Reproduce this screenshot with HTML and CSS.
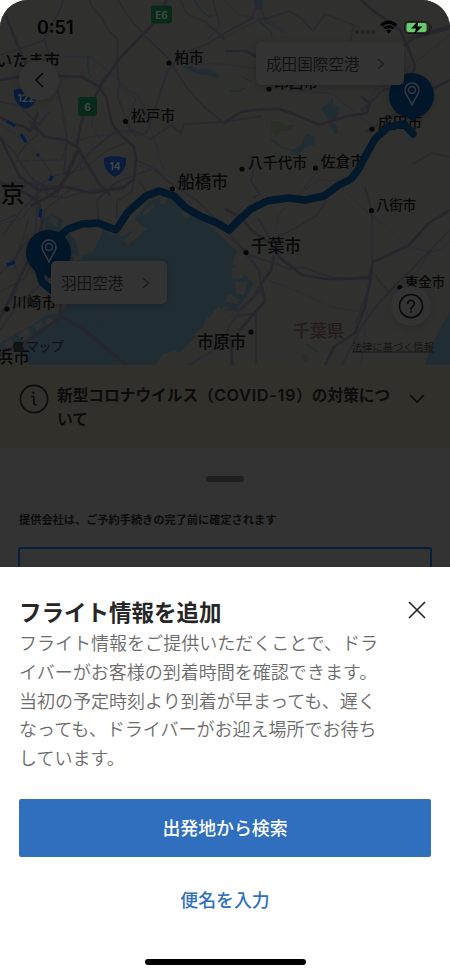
FILE: index.html
```html
<!DOCTYPE html>
<html lang="ja">
<head>
<meta charset="utf-8">
<meta name="viewport" content="width=device-width, initial-scale=1">
<title>フライト情報を追加</title>
<link rel="stylesheet" href="styles.css">
</head>
<body>
<div class="phone">
  <div class="backdrop">
    <section class="map">
      <svg class="map-art" width="450" height="365" viewBox="0 0 450 365">
        <g class="water">
          <path d="M44 220L52 213L62 220L67 231L76 242L79 258L94 251L106 224L118 235L126 231L137 216L149 202L163 196L180 204L194 216L210 226L225 240L237 251L232 264L242 271L253 284L247 296L236 310L225 306L211 315L198 334L181 352L164 353L155 365L30 365L20 352L0 348L0 343L19 332L34 324L46 315L61 313L71 295L59 277L50 250Z"/>
          <path d="M450 312L438 333L430 350L425 365L450 365Z"/>
          <path d="M183 66L190 66L197 69L209 69L220 75L218 78L206 75L197 74L190 70Z"/>
          <path d="M321 109L333 98L333 104L340 109L336 118L329 120Z"/>
          <path d="M329 122L336 125L338 133L334 134Z"/>
          <path d="M291 151L301 145L306 134L315 137L314 145L305 147L297 156Z"/>
          <path d="M253 0L263 0L262 10L256 9Z"/>
        </g>
        <g class="park"><path d="M271 121L278 121L283 125L295 125L289 131L281 131L277 137L271 131Z"/><path d="M302 354l4 0 3 5-3 3-4-3z"/></g>
        <g class="land">
          <path d="M72 253L82 259L73 262ZM80 237L89 235L87 249L82 246ZM94 231L100 230L100 240L95 237ZM107 234L119 228L131 217L138 223L147 229L128 245L123 241L135 230L122 236ZM142 214L151 204L155 206L147 214ZM160 198L169 196L166 204L160 204Z"/>
          <path d="M232 267L244 268L243 278L232 279ZM235 282L248 282L244 296L236 293ZM229 294L240 299L237 304L225 301ZM183 209l8 1-3 8-7-3z"/>
          <path d="M51 216l7 3-1 8-9-6zM63 220l8 5-2 7-8-5zM45 321l6-4 4 7-6 4zM34 325l7-4 3 5-7 5zM18 334l10-6 4 7-10 6zM4 343l8-4 3 6-8 4zM203 324l5-7 5 6-5 7zM213 312l6-6 4 5-6 7zM194 334l6-5 4 6-6 6zM164 354l12-4 7 15-20 0z"/>
        </g>
        <g class="streams">
          <path d="M88 54L88 66L90 77M194 0L202 11L209 17L213 15M258 20L271 32L272 38M230 91L239 91L245 88M242 77L252 82M271 139L281 147L295 151M306 344L318 352"/>
        </g>
        <g class="coast-lines">
          <path d="M0 312L12 301L20 279L14 263L21 244L29 218M0 193L12 181L37 186L54 176L83 169L108 150L128 142M2 236L22 210L45 187L80 187M0 222L18 214L36 195M0 292L25 278L39 249L45 210L72 188M0 356L20 344L40 335L57 319M86 268L99 295L104 318L99 334L92 342M213 0L220 26L208 39"/>
        </g>
        <g class="roads">
          <path d="M0 55L22 48L43 41L61 8L63 0M45 41L51 64L62 108L67 139L64 174M0 80L20 75L37 76M0 137L15 153L22 165L34 181L49 191M0 200L16 194L28 183L59 187L91 151L115 132L132 130L151 139L171 125L181 133L184 124L225 122L262 116M118 0L128 16L145 36L168 58L187 88L203 106L225 124M89 0L93 8L102 18L109 31L118 40L117 63L119 84L118 98L130 130L136 136L147 132L168 70L181 55L209 43L225 33L252 18L258 0L265 19L289 11L302 19L313 31L325 14L346 22L354 25L350 41M180 0L187 14L205 22L216 31L225 40M136 160L155 169L164 178L179 189L196 200L218 221L239 245L259 271L261 289L245 307L239 311M225 309L240 311L253 297L261 284M253 198L260 194L251 181L254 168L250 155M258 218L271 240L294 229L316 216L326 201M247 254L273 263L290 269L305 267L318 273L336 278L369 279M365 187L372 212L372 270L369 289L355 324M342 365L361 327L384 297L405 276L450 230M376 276L389 293M361 111L369 104L381 92L398 84M365 132L383 122L398 112L412 104L433 93M413 164L432 153L450 157M238 316L256 313L256 365M238 314L230 325L225 336L211 352L189 365M0 330L19 303L38 287L53 274M0 273L15 258L23 245L35 237L37 205L38 180M38 181L49 196L63 198L91 190L124 189M98 220L97 200L117 182L152 169M117 218L117 201L132 192L134 178M139 180L145 190L158 202M0 102L20 106L39 125L49 112M18 155L28 143L38 134L29 121"/>
        </g>
        <g class="roads major">
          <path d="M6 16L14 36L26 65M0 80L33 75L60 76L82 77L98 86L106 97L112 124L121 135L134 147L136 159L134 179L124 187L91 193L66 187L38 190L20 177L0 137M0 182L27 194L39 202L42 223L35 246L22 273L0 319M167 0L151 26L121 57L102 83L93 101L84 112L79 132L77 147L88 165L99 184L110 195M77 151L64 180L54 193L31 206M32 123L45 137L66 140L79 149L68 173L57 193M0 117L12 124L23 126L30 131L33 125L38 112M225 51L246 51L257 57L279 67L308 73M225 122L241 112L254 110L279 109L299 116L319 125L347 116L367 113L370 104L361 96M361 0L375 12L400 30L408 47L415 66L411 80M450 80L432 89L418 99M400 48L414 38L429 34L450 28M410 38L433 31L450 26M225 209L241 217L251 230L272 245L280 258L302 275L326 279L347 279L369 277L373 262L408 246L429 223L450 210M372 270L365 307L355 333L334 347L325 365M274 255L271 270L261 284L265 301L239 331M232 365L231 341L225 337M61 302L60 316L86 331L119 359L128 365M0 354L24 344L61 317"/>
        </g>
        <g class="rails">
          <path d="M54 57L91 57L115 77L129 91L138 95L145 110L160 159L164 171M136 98L127 124L132 132L90 137L66 144L62 160L15 161M93 115L92 126L101 142M168 61L199 64L225 64M0 124L30 145L52 173L39 190M225 37L265 17L289 34M225 64L260 69L274 78L298 90L332 94L372 126M365 110L374 91L390 82L450 35M225 0L239 15L264 20L284 33M305 190L319 180L343 181L356 178M342 188L361 207L384 225L405 246L430 252L443 249L450 241M430 252L418 271L367 313L361 365M367 313L332 307L285 286L271 282L260 274M276 230L278 214L292 203L309 182L320 169M225 235L248 252L264 278L258 294L225 320M0 224L21 219L41 195M117 78L124 91L136 98M137 165L167 175L190 188"/>
        </g>
        <path class="rail-blue" d="M7 121L15 126M21 134L26 142M37 154L39 156M52 176L50 181M41 209L40 217M7 265L15 262"/>
        <g class="shields">
          <rect x="151" y="5.500" width="21" height="18" rx="3"/><text x="161.500" y="18.500">E6</text>
          <rect x="78" y="97" width="19" height="19" rx="3"/><text x="87.500" y="110.500">6</text>
          <path class="shield" d="M104 158Q115 154 126 158Q127 171 115 177Q103 171 104 158Z"/><text x="115" y="170">14</text>
          <path class="shield" d="M14 90Q26 86 38 90Q39 103 26 109Q12 103 14 90Z"/><text x="26" y="102">122</text>
          <path class="shield" d="M152 190Q160 186 168 190Z"/>
        </g>
        <g class="dots"><circle cx="169" cy="63" r="2.600"/><circle cx="125.500" cy="121.500" r="2.600"/><circle cx="172.500" cy="189" r="2.600"/><circle cx="269" cy="89" r="2.600"/><circle cx="372" cy="129" r="2.600"/><circle cx="242" cy="169" r="2.600"/><circle cx="315.500" cy="168" r="2.600"/><circle cx="371.500" cy="210.500" r="2.600"/><circle cx="246" cy="252.500" r="2.600"/><circle cx="400" cy="287.500" r="2.600"/><circle cx="251" cy="332" r="2.600"/><circle cx="7" cy="309" r="2.600"/></g>
        <g class="places">
          <text x="-4" y="65.500" textLength="64" class="saitama">いたま市</text>
          <text x="174.500" y="62.500" textLength="29">柏市</text>
          <text x="131" y="120.500" textLength="44">松戸市</text>
          <text x="178" y="188" textLength="50" class="city">船橋市</text>
          <text x="274" y="88" textLength="44">印西市</text>
          <text x="378" y="128" textLength="44">成田市</text>
          <text x="248" y="168" textLength="59">八千代市</text>
          <text x="321" y="167" textLength="44">佐倉市</text>
          <text x="376" y="210" textLength="40" class="small">八街市</text>
          <text x="251" y="251.500" textLength="50" class="city">千葉市</text>
          <text x="405" y="287" textLength="40" class="small">東金市</text>
          <text x="197" y="347.500" textLength="49" class="city">市原市</text>
          <text x="12" y="308" textLength="44">川崎市</text>
          <text x="0.500" y="203" class="tokyo">京</text>
          <text x="-4" y="363" class="city yokohama">浜市</text>
          <text x="293" y="336.500" textLength="51" class="prefecture">千葉県</text>
        </g>
        <path class="route" d="M54 292L42 282L38 268L42 250L60 236L68 229L82 224L98 223L116 230L128 212L146 196L159 191L174 196L186 208L200 216L217 223L229 230L240 219L251 209L267 201L288 198L305 200L324 196L339 185L351 179L358 170L367 153L375 139L388 127L404 124L413 134"/>
        <path class="apple" d="M21 340q2-1 2-3q-3 0-2 3M18 342q-5-1-5 4t4 6q2-1 4 0q3-1 3-4q-3-2 0-5q-2-2-6-1"/>
        <text class="brand" x="26" y="351" textLength="38">マップ</text>
        <text class="legal" x="352" y="350.500" textLength="82">法律に基づく情報</text>
        <path class="legal-line" d="M352 352H434"/>
      </svg>

      <div class="pin pin-haneda"><svg width="16" height="24" viewBox="0 0 16 24"><path d="M8 23C6 17 1 13 1 8a7 7 0 0 1 14 0c0 5-5 9-7 15Z"/><circle cx="8" cy="8" r="3.500"/></svg></div>
      <div class="pin pin-narita"><svg width="16" height="24" viewBox="0 0 16 24"><path d="M8 23C6 17 1 13 1 8a7 7 0 0 1 14 0c0 5-5 9-7 15Z"/><circle cx="8" cy="8" r="3.500"/></svg></div>
      <div class="place-chip chip-narita"><span>成田国際空港</span><svg width="8" height="12" viewBox="0 0 8 12"><path d="M1 1L6.500 6L1 11"/></svg></div>
      <div class="place-chip chip-haneda"><span>羽田空港</span><svg width="8" height="12" viewBox="0 0 8 12"><path d="M1 1L6.500 6L1 11"/></svg></div>
      <div class="round back"><svg width="10" height="16" viewBox="0 0 10 16"><path d="M8.500 1.500L2 8L8.500 14.500"/></svg></div>
      <div class="round help"><svg width="26" height="26" viewBox="0 0 26 26"><circle cx="13" cy="13" r="11.500"/><path d="M9.700 10.500a3.300 3.300 0 1 1 5.300 2.700c-1.400 1-2 1.500-2 3"/><path d="M13 18.500v.8"/></svg></div>

      <div class="status">
        <span class="time">0:51</span>
        <svg class="status-icons" width="82" height="18" viewBox="0 0 82 18">
          <g class="signal"><circle cx="7" cy="14" r="1.900"/><circle cx="12.500" cy="14" r="1.900"/><circle cx="18" cy="14" r="1.900"/><circle cx="23.500" cy="14" r="1.900"/></g>
          <path d="M30 6.300Q38.700 -1.500 47.400 6.300L45.200 8.500Q38.700 3 32.200 8.500ZM33.200 9.500Q38.700 5 44.200 9.500L42 11.600Q38.700 8.800 35.400 11.600ZM36 12.500Q38.700 10.500 41.400 12.500L38.700 15.500Z"/>
          <rect class="battery" x="54.500" y="3.500" width="25" height="12" rx="3.500"/>
          <rect class="charge" x="56.500" y="5" width="20" height="9" rx="2"/>
          <path class="tip" d="M80.500 7.500v4q1.500 0 1.500-2t-1.500-2"/>
          <path d="M68.500 2.500L61 10.500H66L64 16.500L72.500 8.500H67.500Z"/>
        </svg>
      </div>
    </section>

    <section class="notice">
      <svg width="30" height="30" viewBox="0 0 30 30"><circle cx="15" cy="15" r="13.600"/><path d="M12.300 12.500h2.500v6.500q0 2 2.700 1.700"/><circle class="i-dot" cx="14.300" cy="8.800" r="1.200"/></svg>
      <p>新型コロナウイルス（<span class="latin">COVID-19</span>）の対策について</p>
      <svg class="expand" width="16" height="10" viewBox="0 0 16 10"><path d="M1 1L8 8L15 1"/></svg>
    </section>

    <section class="results">
      <div class="handle"></div>
      <p class="provider">提供会社は、ご予約手続きの完了前に確定されます</p>
      <div class="option"></div>
    </section>
  </div>

  <section class="sheet">
    <header class="sheet-head">
      <h1>フライト情報を追加</h1>
      <svg width="18" height="18" viewBox="0 0 18 18"><path d="M1 1L17 17M17 1L1 17"/></svg>
    </header>
    <p class="description">フライト情報をご提供いただくことで、ドライバーがお客様の到着時間を確認できます。当初の予定時刻より到着が早まっても、遅くなっても、ドライバーがお迎え場所でお待ちしています。</p>
    <button class="primary">出発地から検索</button>
    <button class="secondary">便名を入力</button>
    <div class="home-bar"></div>
  </section>
</div>
</body>
</html>
```
FILE: styles.css
```css
* { box-sizing: border-box; }

body {
  margin: 0;
  background: #fff;
  font-family: Inter, "Noto Sans CJK JP", sans-serif;
}

h1, p { margin: 0; }
svg { display: block; }

.phone {
  width: 450px;
  height: 972px;
  display: flex;
  flex-direction: column;
  overflow: hidden;
}

.backdrop {
  height: 567px;
  flex: none;
  overflow: hidden;
  background: #333;
  border-radius: 28px 28px 0 0;
}

/* Map */
.map {
  position: relative;
  height: 365px;
  background: #30302e;
  overflow: hidden;
}

.map-art { font-family: "Noto Sans CJK JP", sans-serif; }
.water { fill: #202d33; }
.land { fill: #30302e; }
.park { fill: #2a2f25; }
.streams, .coast-lines, .roads, .rails { fill: none; stroke-linejoin: round; }
.streams { stroke: #202d33; stroke-width: 1.3; }
.coast-lines { stroke: #292931; stroke-width: 1.2; }
.roads { stroke: #2a2930; stroke-width: 1.8; }
.roads.major { stroke: #28252c; stroke-width: 2.6; }
.rails { stroke: #272a38; stroke-width: 0.9; stroke-dasharray: 4 0.6; }
.rail-blue { fill: none; stroke: #031d4c; stroke-width: 3; }
.route { fill: none; stroke: #02182b; stroke-width: 7.5; stroke-linecap: round; stroke-linejoin: round; }
.shields { fill: #072a19; font: 700 10px Inter, sans-serif; text-anchor: middle; }
.shields text { fill: #414745; }
.shields .shield { fill: #091c3d; stroke: #35373a; stroke-width: 1; paint-order: stroke; }
.dots { fill: #070707; }
.places { fill: #080808; font-size: 14.6px; font-weight: 500; }
.places .saitama { font-size: 16px; }
.places .city { font-size: 16.6px; }
.places .small { font-size: 13.3px; }
.places .tokyo { font-size: 24px; }
.places .yokohama { font-size: 17px; }
.places .prefecture { fill: #251a1d; font-size: 17px; }
.apple { fill: #111415; }
.brand { fill: #111415; font-size: 13px; font-weight: 500; }
.legal { fill: #151515; font-size: 10.2px; }
.legal-line { stroke: #151515; stroke-width: 0.8; }

.pin {
  position: absolute;
  width: 45px;
  height: 45px;
  border-radius: 50%;
  background: #021629;
  display: flex;
  align-items: center;
  justify-content: center;
  padding-bottom: 4px;
  box-shadow: 0 2px 7px rgba(0, 0, 0, 0.2);
}
.pin::after {
  content: "";
  position: absolute;
  top: 40px;
  left: 12.5px;
  border: 10px solid transparent;
  border-top: 8px solid #021629;
}
.pin svg { fill: none; stroke: #343b42; stroke-width: 1.5; }
.pin-haneda { left: 26px; top: 230px; }
.pin-narita { left: 389px; top: 73px; }

.place-chip {
  position: absolute;
  height: 43px;
  padding: 0 10px;
  display: flex;
  align-items: center;
  justify-content: space-between;
  border-radius: 5px;
  background: #333;
  color: #101010;
  font-size: 15.6px;
  font-weight: 350;
  box-shadow: 0 2px 7px rgba(0, 0, 0, 0.2);
}
.place-chip span { margin-top: -2px; }
.place-chip svg { margin-right: 7px; fill: none; stroke: #1d1d1d; stroke-width: 1.3; }
.chip-narita { left: 256px; top: 42px; width: 148px; }
.chip-haneda { left: 51px; top: 261px; width: 116px; }
.chip-narita svg { margin-right: 9px; }

.round {
  position: absolute;
  width: 40px;
  height: 40px;
  border-radius: 50%;
  background: #333;
  display: flex;
  align-items: center;
  justify-content: center;
  box-shadow: 0 2px 8px rgba(0, 0, 0, 0.15);
}
.round svg { fill: none; stroke: #080808; stroke-width: 1.6; stroke-linecap: round; }
.back { left: 19px; top: 60px; }
.help { left: 391px; top: 286px; }

.status {
  position: absolute;
  inset: 18px 18px auto 37px;
  display: flex;
  justify-content: space-between;
}
.time {
  color: #000;
  font-size: 18px;
  line-height: 20px;
  font-weight: 600;
}
.signal { fill: #222; }
.battery { fill: none; stroke: #171b17; }
.charge { fill: #65cd6b; }
.tip { fill: #191919; }

/* Travel notice */
.notice {
  height: 83px;
  padding: 19px 25px 0 19px;
  display: flex;
  align-items: flex-start;
  background: #32302b;
  color: #0c0c0b;
}
.notice svg { flex: none; fill: none; stroke: #0c0c0b; stroke-width: 1.6; }
.notice .i-dot { fill: #0c0c0b; stroke: none; }
.notice p {
  flex: none;
  width: 342px;
  margin: -1px 0 0 8px;
  font-size: 15.7px;
  line-height: 24px;
  font-weight: 600;
}
.notice .latin { font-size: 16.4px; letter-spacing: 0.6px; }
.notice .expand { margin: 10px 0 0 10px; stroke-width: 1.7; }

/* Results behind the sheet */
.results { padding: 28px 18px 0; }
.handle {
  width: 38px;
  height: 6px;
  margin: 0 auto;
  border-radius: 3px;
  background: #1e1e1e;
}
.provider {
  margin: 29px 1px 18px;
  color: #0c0c0c;
  font-size: 11.2px;
  line-height: 18px;
  font-weight: 600;
  white-space: nowrap;
}
.option {
  height: 60px;
  border: 2px solid #03203d;
  border-radius: 3px;
}

/* Flight sheet */
.sheet {
  flex: 1;
  padding: 30px 19px 7px;
  display: flex;
  flex-direction: column;
  background: #fff;
}
.sheet-head {
  height: 32px;
  padding-right: 5px;
  display: flex;
  align-items: center;
  justify-content: space-between;
}
.sheet-head h1 {
  color: #262626;
  font-size: 22.5px;
  line-height: 32px;
  font-weight: 600;
}
.sheet-head svg { margin-top: -6px; stroke: #222; stroke-width: 1.6; }
.description {
  width: 364px;
  margin-top: 1px;
  color: #6b6b6b;
  font-size: 18.03px;
  line-height: 28.8px;
  font-weight: 350;
  line-break: strict;
}
button {
  height: 58px;
  flex: none;
  border: 0;
  padding: 0;
  border-radius: 2px;
  background: none;
  font-family: inherit;
  font-size: 17.9px;
  font-weight: 500;
}
.primary { margin-top: 25px; padding-bottom: 2px; background: #2f6fbd; color: #fff; }
.secondary { margin-top: 14px; padding-bottom: 2px; color: #2f6fbd; }
.home-bar {
  width: 161px;
  height: 6px;
  margin: auto auto 0;
  border-radius: 3px;
  background: #000;
}
```
